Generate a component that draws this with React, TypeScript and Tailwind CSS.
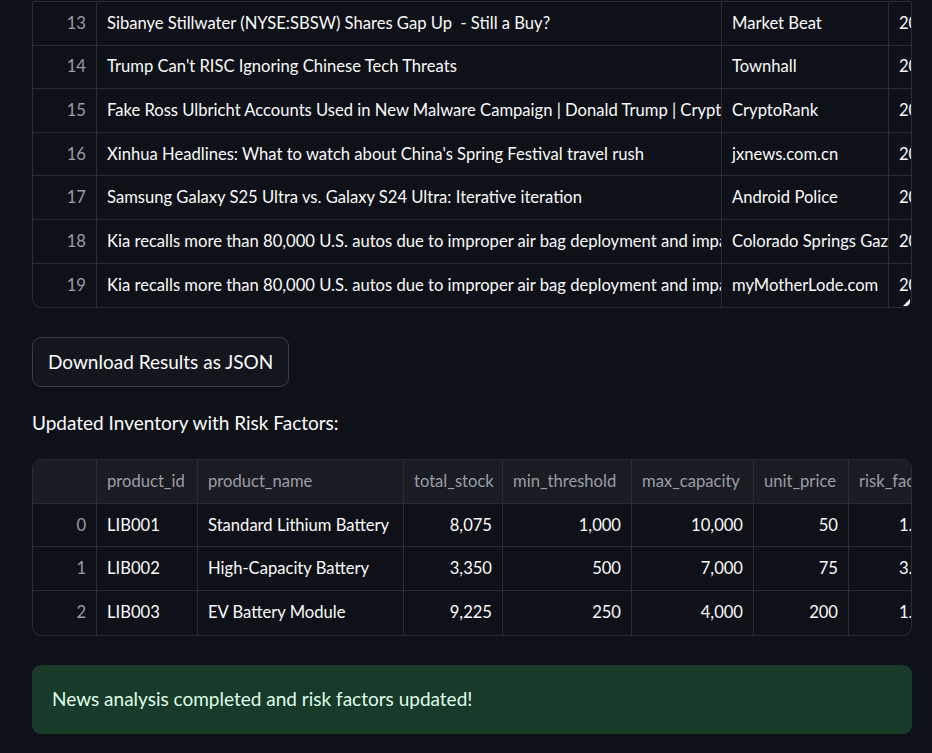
import React from 'react';

type Col = { key: string; label?: string; width: number; align?: 'left' | 'right' };

const newsCols: Col[] = [
  { key: 'idx', width: 64, align: 'right' },
  { key: 'title', width: 625 },
  { key: 'source', width: 167 },
  { key: 'date', width: 120 },
];

const newsRows = [
  ['13', 'Sibanye Stillwater (NYSE:SBSW) Shares Gap Up\u00a0\u00a0- Still a Buy?', 'Market Beat', '2025-01-27'],
  ['14', "Trump Can't RISC Ignoring Chinese Tech Threats", 'Townhall', '2025-01-27'],
  ['15', 'Fake Ross Ulbricht Accounts Used in New Malware Campaign | Donald Trump | CryptoRank News', 'CryptoRank', '2025-01-27'],
  ['16', "Xinhua Headlines: What to watch about China's Spring Festival travel rush", 'jxnews.com.cn', '2025-01-27'],
  ['17', 'Samsung Galaxy S25 Ultra vs. Galaxy S24 Ultra: Iterative iteration', 'Android Police', '2025-01-27'],
  ['18', 'Kia recalls more than 80,000 U.S. autos due to improper air bag deployment and impact', 'Colorado Springs Gazette', '2025-01-27'],
  ['19', 'Kia recalls more than 80,000 U.S. autos due to improper air bag deployment and impact', 'myMotherLode.com', '2025-01-27'],
];

const invCols: Col[] = [
  { key: 'idx', label: '', width: 64, align: 'right' },
  { key: 'product_id', label: 'product_id', width: 101 },
  { key: 'product_name', label: 'product_name', width: 206 },
  { key: 'total_stock', label: 'total_stock', width: 99, align: 'right' },
  { key: 'min_threshold', label: 'min_threshold', width: 129, align: 'right' },
  { key: 'max_capacity', label: 'max_capacity', width: 122, align: 'right' },
  { key: 'unit_price', label: 'unit_price', width: 95, align: 'right' },
  { key: 'risk_factor', label: 'risk_factor', width: 112, align: 'right' },
];

const invRows = [
  ['0', 'LIB001', 'Standard Lithium Battery', '8,075', '1,000', '10,000', '50', '1.4000'],
  ['1', 'LIB002', 'High-Capacity Battery', '3,350', '500', '7,000', '75', '3.2000'],
  ['2', 'LIB003', 'EV Battery Module', '9,225', '250', '4,000', '200', '1.4000'],
];

const font = { fontFamily: 'Lato, "Noto Sans", sans-serif' };

function Cell({ col, value, header, last }: { col: Col; value: string; header?: boolean; last?: boolean }) {
  const isIdx = col.key === 'idx';
  return (
    <div
      className={`shrink-0 h-full flex items-center px-[10px] overflow-hidden whitespace-nowrap ${
        last ? '' : 'border-r border-[#2a2c34]'
      } ${!header && col.align === 'right' ? 'justify-end' : 'justify-start'} ${
        header || isIdx ? 'text-[#9a9ca6]' : 'text-[#fafafa]'
      }`}
      style={{ width: col.width }}
    >
      {value}
    </div>
  );
}

function Row({ cols, values, header, bottom }: { cols: Col[]; values: string[]; header?: boolean; bottom?: boolean }) {
  return (
    <div
      className={`flex h-[43.6px] ${bottom ? '' : 'border-b border-[#2a2c34]'} ${header ? 'bg-[#1a1c23]' : ''}`}
    >
      {cols.map((c, i) => (
        <Cell key={c.key} col={c} value={values[i]} header={header} last={i === cols.length - 1} />
      ))}
    </div>
  );
}

export default function App() {
  return (
    <div className="min-h-screen bg-[#0e1117] text-[#fafafa] pt-px" style={font}>
      <div className="pl-[32px] pr-[20px]">
        {/* news table, scrolled down */}
        <div className="relative border border-[#2a2c34] rounded-b-[9px] overflow-hidden text-[16.6px]">
          {newsRows.map((r, i) => (
            <Row key={r[0]} cols={newsCols} values={r} bottom={i === newsRows.length - 1} />
          ))}
          <svg className="absolute right-0 bottom-0" width="9" height="9" viewBox="0 0 9 9">
            <path d="M8 1 L8 8 L1 8 Z" fill="#fafafa" />
          </svg>
        </div>

        <button className="mt-[29px] h-[50px] px-[15px] rounded-[9px] border border-[#3a3c44] bg-[#13161d] text-[19px] text-[#fafafa]">
          Download Results as JSON
        </button>

        <div className="mt-[22px] text-[19px] leading-[28px]">Updated Inventory with Risk Factors:</div>

        <div className="mt-[22px] border border-[#2a2c34] rounded-[9px] overflow-hidden text-[16.6px]">
          <Row cols={invCols} values={invCols.map((c) => c.label || '')} header />
          {invRows.map((r, i) => (
            <Row key={r[0]} cols={invCols} values={r} bottom={i === invRows.length - 1} />
          ))}
        </div>

        <div className="mt-[29px] h-[69px] rounded-[9px] bg-[#173a29] flex items-center px-[20px] text-[19px] text-[#dffde9]">
          News analysis completed and risk factors updated!
        </div>
      </div>
    </div>
  );
}
